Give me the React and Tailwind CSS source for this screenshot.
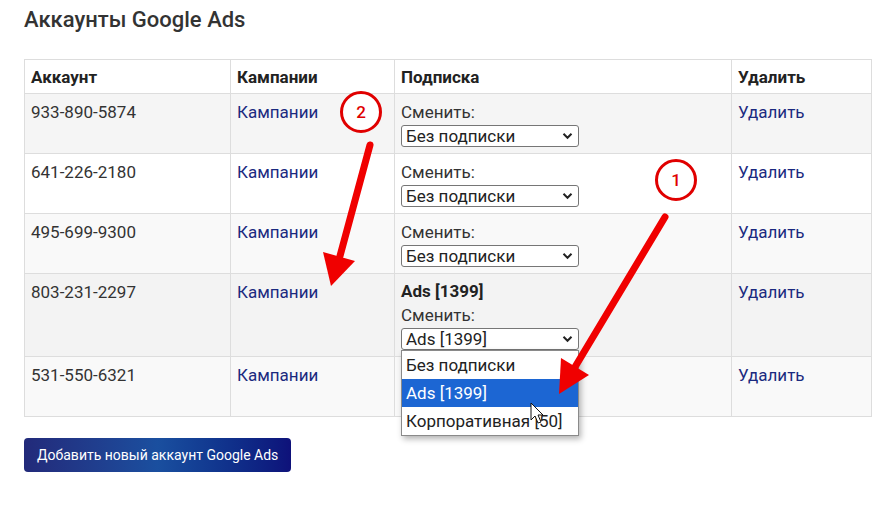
import React from 'react';

const accounts = [
  { id: '933-890-5874', plan: null, bg: 'bg-[#f5f5f5]' },
  { id: '641-226-2180', plan: null, bg: 'bg-white' },
  { id: '495-699-9300', plan: null, bg: 'bg-[#f9f9f9]' },
  { id: '803-231-2297', plan: 'Ads [1399]', bg: 'bg-[#f3f3f3]', open: true },
  { id: '531-550-6321', plan: null, bg: 'bg-[#f9f9f9]' },
];

const options = ['Без подписки', 'Ads [1399]', 'Корпоративная [50]'];

function Chevron() {
  return (
    <svg width="11" height="8" viewBox="0 0 11 8" className="shrink-0">
      <path d="M1.5 1.8 L5.5 5.8 L9.5 1.8" fill="none" stroke="#222" strokeWidth="2" />
    </svg>
  );
}

function PlanSelect({ value, open }) {
  return (
    <div className="relative mt-px w-[178px]">
      <div className="flex h-[22px] items-center justify-between rounded-[3px] border border-[#767676] bg-white pl-[4px] pr-[5px] text-[17px] leading-none text-[#222]">
        <span>{value}</span>
        <Chevron />
      </div>
      {open && (
        <div className="absolute left-0 top-[22px] z-10 w-[178px] border border-[#8a8a8a] bg-white shadow-[2px_3px_6px_rgba(0,0,0,0.3)]">
          {options.map((o) => (
            <div
              key={o}
              className={
                o === value
                  ? 'flex h-[28px] items-center bg-[#1c66d3] pl-[4px] text-[17px] text-white'
                  : 'flex h-[28px] items-center pl-[4px] text-[17px] text-[#222]'
              }
            >
              {o}
            </div>
          ))}
        </div>
      )}
    </div>
  );
}

function Annotations() {
  return (
    <svg className="pointer-events-none absolute left-0 top-0 z-20" width="879" height="509">
      {/* marker 2 */}
      <circle cx="361" cy="112" r="19.5" fill="white" stroke="#e00000" strokeWidth="3" />
      <text x="361" y="118" textAnchor="middle" fontSize="17" fontWeight="500" fontFamily="Roboto, sans-serif" fill="#e00000">2</text>
      <line x1="370" y1="145" x2="340" y2="256" stroke="#f00000" strokeWidth="7" strokeLinecap="round" />
      <polygon points="331,286 323,252 355,261" fill="#f00000" />
      {/* marker 1 */}
      <circle cx="676" cy="180" r="19.5" fill="white" stroke="#e00000" strokeWidth="3" />
      <text x="676" y="186" textAnchor="middle" fontSize="17" fontWeight="500" fontFamily="Roboto, sans-serif" fill="#e00000">1</text>
      <line x1="665" y1="217" x2="575" y2="367" stroke="#f00000" strokeWidth="7" strokeLinecap="round" />
      <polygon points="559,394 561,358 589,375" fill="#f00000" />
      {/* mouse pointer */}
      <path
        d="M531 403 L531 420 L535 416 L538 423 L541 422 L538 415 L543 415 Z"
        fill="white"
        stroke="#111"
        strokeWidth="1"
        strokeLinejoin="round"
      />
    </svg>
  );
}

export default function App() {
  return (
    <div className="relative h-[509px] w-[879px] overflow-hidden bg-white px-6 pt-[5px] font-['Roboto',sans-serif] text-[#333]">
      <h2 className="text-[22px] font-medium leading-[30px] text-[#333]">Аккаунты Google Ads</h2>

      <table className="mt-[24px] w-[847px] table-fixed border-collapse text-[17px] leading-[24px]">
        <colgroup>
          <col className="w-[206px]" />
          <col className="w-[164px]" />
          <col className="w-[337px]" />
          <col className="w-[140px]" />
        </colgroup>
        <thead>
          <tr className="bg-white">
            <th className="border border-[#dddddd] px-[6px] pb-[4px] pt-[5px] text-left font-bold text-[#222]">Аккаунт</th>
            <th className="border border-[#dddddd] px-[6px] pb-[4px] pt-[5px] text-left font-bold text-[#222]">Кампании</th>
            <th className="border border-[#dddddd] px-[6px] pb-[4px] pt-[5px] text-left font-bold text-[#222]">Подписка</th>
            <th className="border border-[#dddddd] px-[6px] pb-[4px] pt-[5px] text-left font-bold text-[#222]">Удалить</th>
          </tr>
        </thead>
        <tbody>
          {accounts.map((a) => (
            <tr key={a.id} className={a.bg}>
              <td className="border border-[#dddddd] px-[6px] pb-[6px] pt-[6px] align-top text-[#333]">{a.id}</td>
              <td className="border border-[#dddddd] px-[6px] pb-[6px] pt-[6px] align-top">
                <a className="text-[#1b2a7f]">Кампании</a>
              </td>
              <td className="border border-[#dddddd] px-[6px] pb-[6px] pt-[6px] align-top">
                {a.plan && <div className="font-bold leading-[23px] text-[#222]">{a.plan}</div>}
                <div className="text-[#333]">Сменить:</div>
                <PlanSelect value={a.plan || 'Без подписки'} open={a.open} />
              </td>
              <td className="border border-[#dddddd] px-[6px] pb-[6px] pt-[6px] align-top">
                <a className="text-[#1b2a7f]">Удалить</a>
              </td>
            </tr>
          ))}
        </tbody>
      </table>

      <button
        type="button"
        className="mt-[21px] h-[34px] rounded-[4px] bg-linear-to-r from-[#222a7a] via-[#1a4f9f] to-[#0e117a] px-[13px] text-[14px] text-white"
      >
        Добавить новый аккаунт Google Ads
      </button>

      <Annotations />
    </div>
  );
}
